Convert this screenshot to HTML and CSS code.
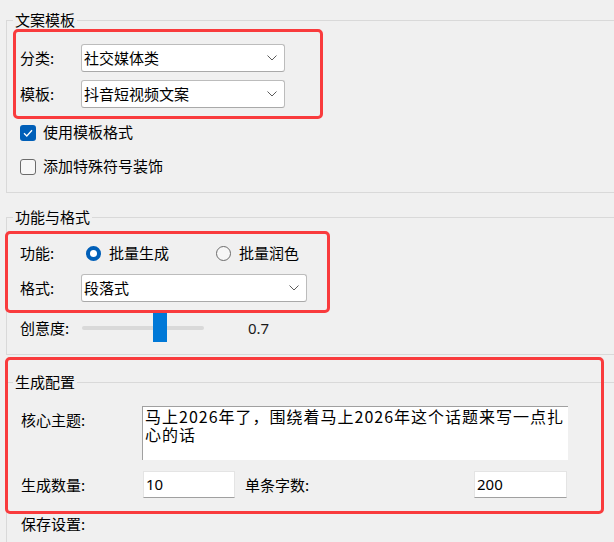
FILE: index.html
```html
<!DOCTYPE html>
<html lang="zh-CN">
<head>
<meta charset="utf-8">
<title>文案生成</title>
<link rel="stylesheet" href="styles.css">
</head>
<body>
<div class="window">
  <fieldset class="group g1">
    <legend>文案模板</legend>
    <div class="row combo-row first">
      <span class="lbl">分类:</span>
      <div class="combo"><span class="combo-text">社交媒体类</span><svg class="chev" width="10" height="6" viewBox="0 0 10 6"><polyline points="0.5,0.5 5,5 9.5,0.5" fill="none" stroke="#5c5c5c" stroke-width="1"/></svg></div>
    </div>
    <div class="row combo-row second">
      <span class="lbl">模板:</span>
      <div class="combo"><span class="combo-text">抖音短视频文案</span><svg class="chev" width="10" height="6" viewBox="0 0 10 6"><polyline points="0.5,0.5 5,5 9.5,0.5" fill="none" stroke="#5c5c5c" stroke-width="1"/></svg></div>
    </div>
    <div class="check-row c1">
      <span class="box checked"><svg width="16" height="16" viewBox="0 0 16 16"><polyline points="4,8.3 6.8,11 12,5.2" fill="none" stroke="#fff" stroke-width="1.3"/></svg></span>
      <span class="check-text">使用模板格式</span>
    </div>
    <div class="check-row c2">
      <span class="box"></span>
      <span class="check-text">添加特殊符号装饰</span>
    </div>
  </fieldset>

  <fieldset class="group g2">
    <legend>功能与格式</legend>
    <div class="row radio-row">
      <span class="lbl">功能:</span>
      <span class="radio on"></span><span class="radio-text">批量生成</span>
      <span class="radio off"></span><span class="radio-text">批量润色</span>
    </div>
    <div class="row combo-row fmt">
      <span class="lbl">格式:</span>
      <div class="combo wide"><span class="combo-text">段落式</span><svg class="chev" width="10" height="6" viewBox="0 0 10 6"><polyline points="0.5,0.5 5,5 9.5,0.5" fill="none" stroke="#5c5c5c" stroke-width="1"/></svg></div>
    </div>
    <div class="row slider-row">
      <span class="lbl">创意度:</span>
      <div class="slider"><div class="track"></div><div class="thumb"></div></div>
      <span class="val">0.7</span>
    </div>
  </fieldset>

  <fieldset class="group g3">
    <legend>生成配置</legend>
    <div class="row3 topic-row">
      <span class="lbl3">核心主题:</span>
      <div class="textbox">马上2026年了，围绕着马上2026年这个话题来写一点扎心的话</div>
    </div>
    <div class="row3 count-row">
      <span class="lbl3">生成数量:</span>
      <div class="entry">10</div>
      <span class="lbl-chars">单条字数:</span>
      <div class="entry right">200</div>
    </div>
    <div class="row3 save-row">
      <span class="lbl3">保存设置:</span>
    </div>
  </fieldset>

  <div class="annot a1"></div>
  <div class="annot a2"></div>
  <div class="annot a3"></div>
</div>
</body>
</html>
```

FILE: styles.css
```css
html, body {
  margin: 0;
  padding: 0;
  overflow: hidden;
  background: #f0f0f0;
}

body {
  font-family: "Noto Sans CJK SC", "Noto Sans", sans-serif;
  font-size: 15px;
  color: #000;
}

.window {
  position: relative;
  width: 614px;
  height: 542px;
  box-sizing: border-box;
  padding: 10px 0 0 6px;
  overflow: hidden;
}

.group {
  margin: 0;
  padding: 0;
  min-width: 0;
  border: 1px solid #d9d9d9;
  border-right: none;
}

.group legend {
  margin-left: 6px;
  padding: 0 2px;
  font-size: 15px;
  line-height: 20px;
}

.g1 { padding-bottom: 16px; }
.g2 { margin-top: 14px; padding-bottom: 12px; }
.g3 { margin-top: 17px; padding-bottom: 4px; border-bottom: none; }

.row {
  display: flex;
  align-items: center;
  margin-left: 13px;
}

.lbl {
  flex: none;
  width: 61px;
  line-height: 20px;
}

/* combo boxes */
.combo-row { height: 28px; }
.combo-row.first { margin-top: 14px; }
.combo-row.second { margin-top: 8px; }
.combo-row.fmt { margin-top: 7px; }

.combo {
  display: flex;
  align-items: center;
  justify-content: space-between;
  width: 204px;
  height: 28px;
  box-sizing: border-box;
  background: #fff;
  border: 1px solid #bcbcbc;
  border-bottom-color: #a9a9a9;
  border-radius: 3px;
  padding: 0 7px 0 2px;
}

.combo.wide { width: 226px; }

.combo-text { line-height: 20px; }

.chev { flex: none; }

/* checkboxes */
.check-row {
  display: flex;
  align-items: center;
  height: 20px;
  margin-left: 13px;
}

.check-row.c1 { margin-top: 14px; }
.check-row.c2 { margin-top: 14px; }

.box {
  flex: none;
  width: 16px;
  height: 16px;
  box-sizing: border-box;
  border: 1px solid #6b6b6b;
  border-radius: 3px;
  background: #f7f7f7;
  margin-top: 2px;
}

.box.checked {
  border: none;
  background: #005fb8;
}

.box svg { display: block; }

.check-text {
  margin-left: 7px;
  line-height: 20px;
}

/* radios */
.radio-row {
  margin-top: 12px;
  height: 28px;
}

.radio {
  flex: none;
  width: 15px;
  height: 15px;
  box-sizing: border-box;
  border-radius: 50%;
}

.radio.on {
  margin-left: 5px;
  background: #fff;
  border: 4px solid #005fb8;
}

.radio.off {
  margin-left: 47px;
  background: #f7f7f7;
  border: 1px solid #6b6b6b;
}

.radio-text {
  margin-left: 8px;
  line-height: 20px;
}

/* slider */
.slider-row {
  margin-top: 11px;
  height: 29px;
}

.slider {
  position: relative;
  display: flex;
  align-items: center;
  width: 122px;
  height: 29px;
  margin-left: 1px;
}

.track {
  width: 100%;
  height: 4px;
  border-radius: 2px;
  background: #d9d9d9;
}

.thumb {
  position: absolute;
  top: 0;
  left: 71px;
  width: 14px;
  height: 29px;
  background: #0078d7;
}

.val {
  margin-left: 44px;
  font-family: "Noto Sans", sans-serif;
  font-size: 15px;
  color: #1a1a1a;
}

/* generation config */
.row3 {
  display: flex;
  margin-left: 14px;
}

.lbl3 {
  flex: none;
  width: 121px;
  line-height: 28px;
}

.topic-row {
  align-items: flex-start;
  margin-top: 14px;
}

.textbox {
  width: 426px;
  height: 54px;
  box-sizing: border-box;
  background: #fff;
  border-top: 1px solid #a0a0a0;
  border-left: 1px solid #a0a0a0;
  padding: 0 0 0 2px;
  font-size: 16px;
  line-height: 18px;
  letter-spacing: 1px;
  color: #000;
}

.count-row {
  align-items: center;
  margin-top: 11px;
  width: 546px;
  height: 27px;
}

.count-row .lbl3 { width: 122px; }

.entry {
  flex: none;
  width: 92px;
  height: 27px;
  box-sizing: border-box;
  background: #fff;
  border: 1px solid #e4e4e4;
  border-bottom-color: #a0a0a0;
  padding-left: 2px;
  font-family: "Noto Sans", sans-serif;
  font-size: 15px;
  line-height: 25px;
  color: #000;
}

.entry.right {
  margin-left: auto;
  width: 93px;
}

.lbl-chars {
  margin-left: 10px;
  line-height: 20px;
}

.save-row {
  margin-top: 12px;
  height: 28px;
}

/* red annotation frames drawn over the screenshot */
.annot {
  position: absolute;
  box-sizing: border-box;
  border: 3px solid #f93b3d;
  border-radius: 5px;
  pointer-events: none;
}

.a1 { left: 13px; top: 29px; width: 310px; height: 90px; }
.a2 { left: 5px; top: 231px; width: 325px; height: 82px; }
.a3 { left: 5px; top: 357px; width: 599px; height: 157px; }
```
